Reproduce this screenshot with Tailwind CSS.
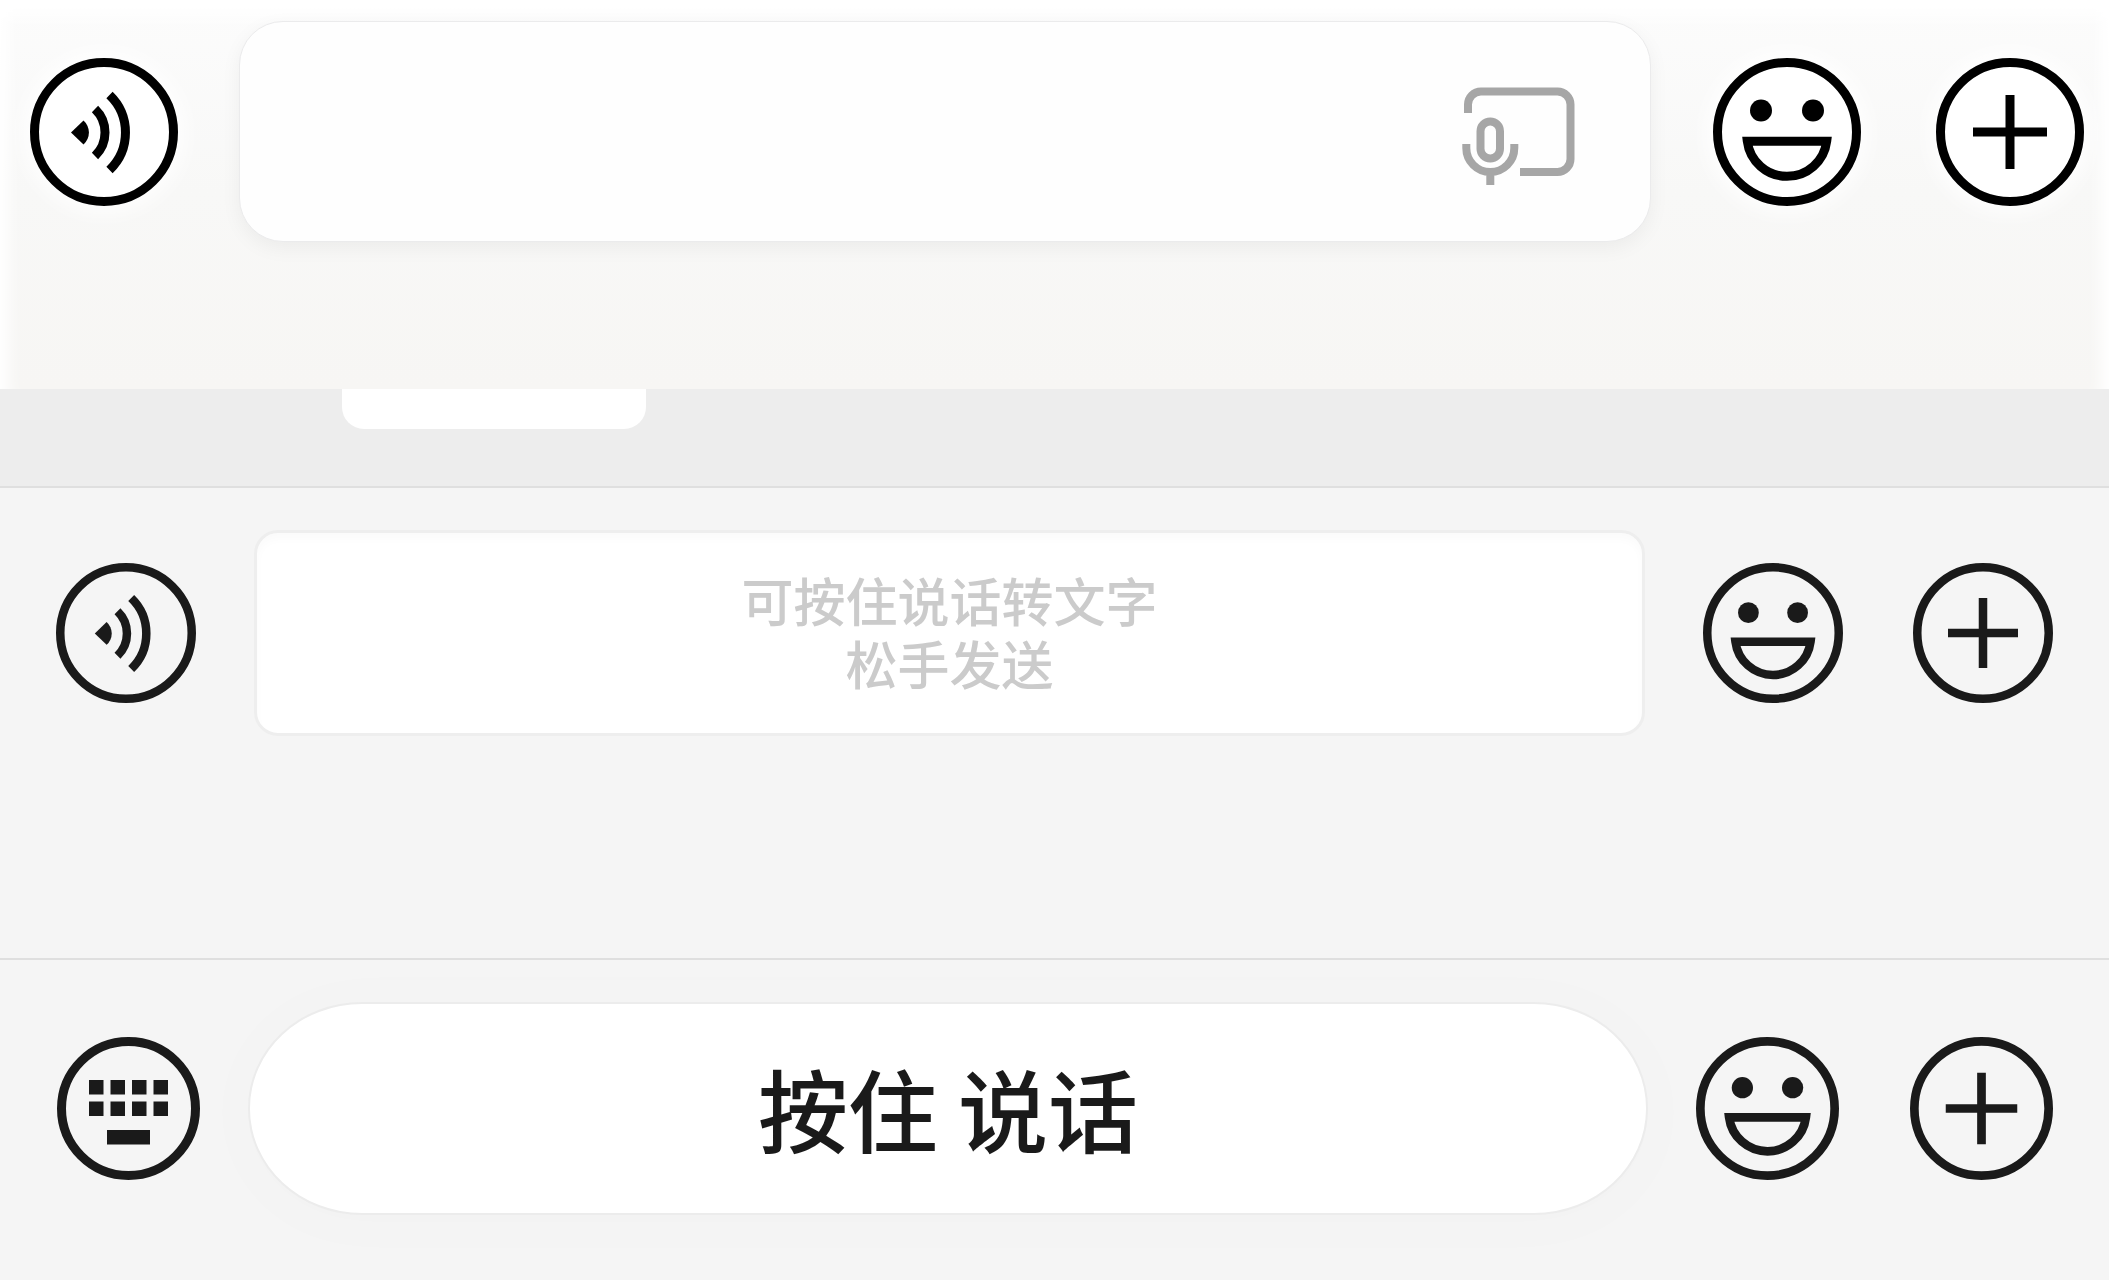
<!DOCTYPE html>
<html lang="zh-CN">
<head>
    <meta charset="UTF-8">
    <meta name="viewport" content="width=device-width, initial-scale=1.0">
    <title>语音输入栏</title>
    <script src="https://cdn.jsdelivr.net/npm/@tailwindcss/browser@4"></script>
</head>
<body class="bg-[#f5f5f5] min-h-screen flex flex-col font-['Noto_Sans_CJK_SC',sans-serif] text-[#1a1a1a]">

    <!-- shared icons -->
    <svg class="hidden" aria-hidden="true">
        <symbol id="icon-voice" viewBox="0 0 148 148">
            <circle cx="74" cy="74" r="69.5" fill="none" stroke="currentColor" stroke-width="9"/>
            <path d="M41 74.5L53.5 62.5A16 16 0 0 1 53.5 86.5Z" fill="currentColor"/>
            <path d="M65 51A32.6 32.6 0 0 1 65 98M79.5 37A52 52 0 0 1 79.5 112" fill="none" stroke="currentColor" stroke-width="9"/>
        </symbol>
        <symbol id="icon-emoji" viewBox="0 0 148 148">
            <circle cx="74" cy="74" r="69.5" fill="none" stroke="currentColor" stroke-width="9"/>
            <circle cx="48" cy="52.5" r="11" fill="currentColor"/>
            <circle cx="100" cy="52.5" r="11" fill="currentColor"/>
            <path d="M34.3 83.2H113.7A40 40 0 0 1 34.3 83.2Z" fill="none" stroke="currentColor" stroke-width="9"/>
        </symbol>
        <symbol id="icon-plus" viewBox="0 0 148 148">
            <circle cx="74" cy="74" r="69.5" fill="none" stroke="currentColor" stroke-width="9"/>
            <path d="M37 74H111M74 37V111" fill="none" stroke="currentColor" stroke-width="9"/>
        </symbol>
        <symbol id="icon-keyboard" viewBox="0 0 143 143">
            <circle cx="71.5" cy="71.5" r="67" fill="none" stroke="currentColor" stroke-width="9"/>
            <path d="M32 43h14.5v14.5H32zM53.5 43H68v14.5H53.5zM75 43h14.5v14.5H75zM96.5 43H111v14.5H96.5zM32 64.5h14.5V79H32zM53.5 64.5H68V79H53.5zM75 64.5h14.5V79H75zM96.5 64.5H111V79H96.5zM50 93h43v14.5H50z" fill="currentColor"/>
        </symbol>
    </svg>

    <!-- text input bar -->
    <section class="flex items-center pl-[30px] pr-[25px] pt-[21px] pb-[147px] bg-linear-to-b from-[#fcfcfc] via-[#f8f8f7] to-[#f7f6f4] shadow-[inset_0_24px_20px_-8px_#fff,inset_20px_0_16px_-12px_#fff,inset_-20px_0_16px_-12px_#fff] text-black">
        <button type="button" aria-label="语音" class="shrink-0 rounded-full bg-white shadow-[0_0_20px_8px_#fffc]">
            <svg class="size-[148px]"><use href="#icon-voice"/></svg>
        </button>
        <div class="flex flex-1 items-center ml-[61px] mr-[62px] h-[221px] pl-12 pr-[74px] bg-[#fefefe] rounded-[44px] border border-[#ebebec] shadow-[0_6px_20px_#0000000d]">
            <input type="text" aria-label="消息" class="flex-1 min-w-0 h-full text-[52px] outline-none">
            <button type="button" aria-label="语音转文字" class="shrink-0 text-[#a6a6a6]">
                <svg class="w-[114px] h-[109px]" viewBox="22 7 114 109" fill="none" stroke="currentColor" stroke-width="8">
                    <path d="M28 43V34.5A13 13 0 0 1 41 21.5H117.5A13 13 0 0 1 130.5 34.5V89A13 13 0 0 1 117.5 102H80"/>
                    <rect x="40.5" y="51.5" width="19.5" height="37" rx="9.75"/>
                    <path d="M26.3 74V78A24 24 0 0 0 74.3 78V74M50.3 102V115"/>
                </svg>
            </button>
        </div>
        <div class="flex shrink-0 gap-[75px]">
            <button type="button" aria-label="表情" class="rounded-full bg-white shadow-[0_0_20px_8px_#fffc]">
                <svg class="size-[148px]"><use href="#icon-emoji"/></svg>
            </button>
            <button type="button" aria-label="更多" class="rounded-full bg-white shadow-[0_0_20px_8px_#fffc]">
                <svg class="size-[148px]"><use href="#icon-plus"/></svg>
            </button>
        </div>
    </section>

    <!-- bottom of the chat area -->
    <div class="h-[99px] pl-[342px] bg-[#ededed] border-b-2 border-[#dfdfdf]">
        <div class="w-[304px] h-10 bg-white rounded-b-[22px]"></div>
    </div>

    <!-- hold to dictate -->
    <section class="flex items-center px-14 pt-[42px] pb-[222px]">
        <button type="button" aria-label="语音" class="shrink-0">
            <svg class="size-[140px]"><use href="#icon-voice"/></svg>
        </button>
        <textarea rows="2" aria-label="消息" placeholder="可按住说话转文字&#10;松手发送" class="block flex-1 min-w-0 ml-[58px] mr-[58px] h-[206px] py-[35px] px-6 bg-white border-3 border-[#eeeeee] rounded-3xl resize-none overflow-hidden outline-none text-center text-[52px] leading-[63px] font-medium placeholder:text-[#cbcbcb] shadow-[inset_0_6px_10px_#00000005]"></textarea>
        <div class="flex shrink-0 gap-[70px]">
            <button type="button" aria-label="表情">
                <svg class="size-[140px]"><use href="#icon-emoji"/></svg>
            </button>
            <button type="button" aria-label="更多">
                <svg class="size-[140px]"><use href="#icon-plus"/></svg>
            </button>
        </div>
    </section>

    <!-- hold to talk -->
    <section class="flex flex-1 items-start pl-[57px] pr-14 pt-[42px] pb-16 border-t-2 border-[#dfdfdf]">
        <div class="flex flex-1 items-center">
            <button type="button" aria-label="键盘" class="shrink-0">
                <svg class="size-[143px]"><use href="#icon-keyboard"/></svg>
            </button>
            <button type="button" class="flex-1 ml-12 mr-12 h-[213px] pb-1 bg-white border-2 border-[#ececec] rounded-[114px/106px] shadow-[0_4px_60px_16px_#00000003] text-[90px] leading-none font-medium">按住 说话</button>
            <div class="flex shrink-0 gap-[71px]">
                <button type="button" aria-label="表情">
                    <svg class="size-[143px]"><use href="#icon-emoji"/></svg>
                </button>
                <button type="button" aria-label="更多">
                    <svg class="size-[143px]"><use href="#icon-plus"/></svg>
                </button>
            </div>
        </div>
    </section>

</body>
</html>
